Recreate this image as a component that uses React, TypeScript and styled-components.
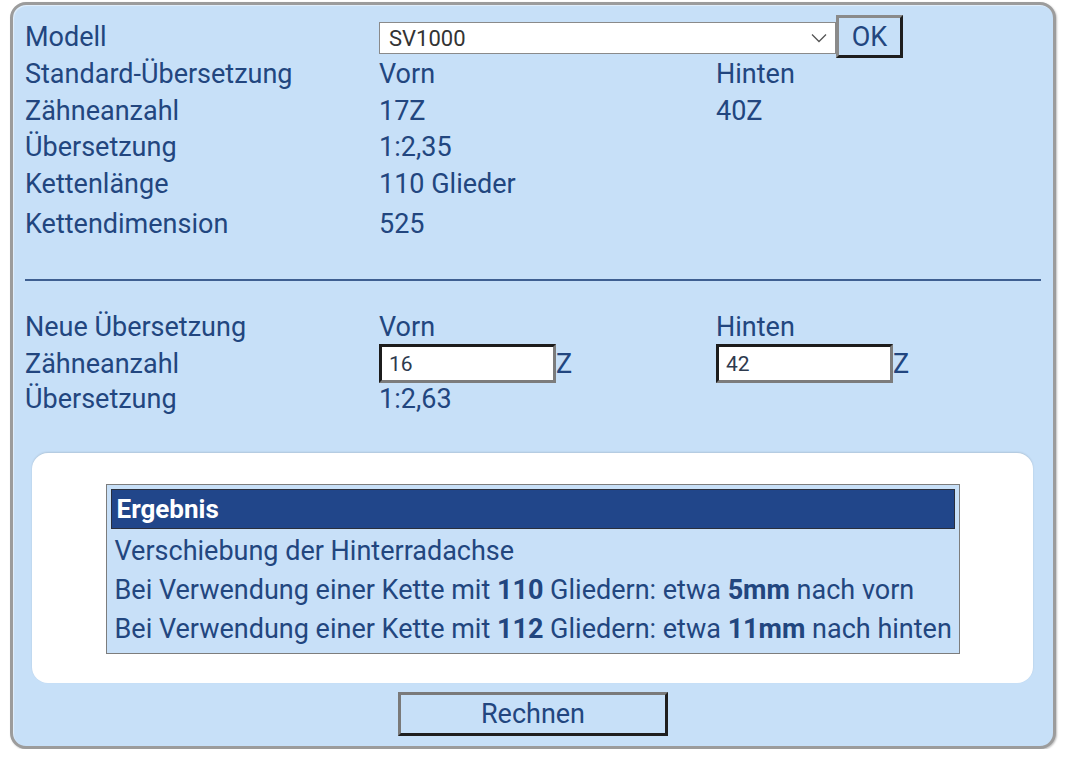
import React from "react";
import styled, { createGlobalStyle } from "styled-components";

const Global = createGlobalStyle`
  html, body { margin: 0; padding: 0; background: #ffffff; }
  body {
    font-family: Roboto, "Noto Sans", "Liberation Sans", sans-serif;
    color: #22467f;
  }
`;

const Panel = styled.div`
  box-sizing: border-box;
  margin: 2px 0 0 10px;
  width: 1046px;
  height: 747px;
  border: 3px solid #9c9c9c;
  border-radius: 16px;
  background: #c7e0f8;
  box-shadow: 1px 1px 2px rgba(0, 0, 0, 0.25), inset 1px 1px 1px rgba(255, 255, 255, 0.5);
  padding: 10px 12px 0 12px;
  display: flex;
  flex-direction: column;
`;

const Row = styled.div<{ $h: number; $mt?: number }>`
  display: grid;
  grid-template-columns: 354px 337px 1fr;
  align-items: center;
  height: ${(p) => p.$h}px;
  margin-top: ${(p) => p.$mt ?? 0}px;
  font-size: 27px;
  line-height: normal;
  white-space: nowrap;
`;

const Cell = styled.div`
  display: flex;
  align-items: center;
`;

const Controls = styled.div`
  grid-column: 2 / 4;
  align-self: start;
  display: flex;
  align-items: flex-start;
`;

const SelectBox = styled.div`
  box-sizing: border-box;
  margin-top: 7px;
  width: 457px;
  height: 32px;
  background: #ffffff;
  border: 1px solid #8a8a8a;
  display: flex;
  align-items: center;
  justify-content: space-between;
  padding: 0 8px 0 9px;
  font-size: 22px;
  color: #333333;
`;

const OkButton = styled.button`
  box-sizing: border-box;
  width: 67px;
  height: 43px;
  margin: 0;
  padding: 0;
  background: #c7e0f8;
  border-style: solid;
  border-width: 3px;
  border-color: #8a8a8a #1e1e1e #1e1e1e #8a8a8a;
  font-family: inherit;
  font-size: 27px;
  color: #22467f;
  cursor: pointer;
`;

const Divider = styled.hr`
  margin: 33px 0 0 0;
  border: none;
  height: 2px;
  background: #3e5f91;
`;

const NumberInput = styled.input`
  box-sizing: border-box;
  width: 177px;
  height: 39px;
  margin: 0;
  padding: 0 0 0 7px;
  background: #ffffff;
  border-style: solid;
  border-width: 3px;
  border-color: #1c1c1c #7c7c7c #7c7c7c #1c1c1c;
  font-family: inherit;
  font-size: 21px;
  color: #2e3a4e;
  outline: none;
`;

const Unit = styled.span`
  font-size: 27px;
`;

const Card = styled.div`
  box-sizing: border-box;
  margin: 38px 0 0 7px;
  width: 1001px;
  height: 230px;
  background: #ffffff;
  border-radius: 16px;
  box-shadow: 0 -1px 2px rgba(0, 0, 0, 0.12);
  padding-top: 31px;
  display: flex;
  justify-content: center;
  align-items: flex-start;
`;

const ResultTable = styled.div`
  box-sizing: border-box;
  width: 854px;
  height: 170px;
  border: 1px solid #7d7d7d;
  background: #c8e0f8;
  padding: 4px;
  display: flex;
  flex-direction: column;
`;

const ResultHeader = styled.div`
  box-sizing: border-box;
  height: 40px;
  background: #21468a;
  border: 1px solid #2a2f3d;
  color: #ffffff;
  font-weight: 700;
  font-size: 26px;
  display: flex;
  align-items: center;
  padding-left: 5px;
`;

const ResultLine = styled.div<{ $first?: boolean }>`
  height: 39.5px;
  margin-top: ${(p) => (p.$first ? 2 : 0)}px;
  display: flex;
  align-items: center;
  padding-left: 4px;
  font-size: 27px;
  white-space: nowrap;
  color: #22467f;
`;

const Footer = styled.div`
  display: flex;
  justify-content: center;
  margin-top: 9px;
`;

const CalcButton = styled.button`
  box-sizing: border-box;
  width: 270px;
  height: 44px;
  margin: 0;
  padding: 0;
  background: #c7e0f8;
  border-style: solid;
  border-width: 3px;
  border-color: #7a7a7a #1f1f1f #1f1f1f #7a7a7a;
  font-family: inherit;
  font-size: 27px;
  color: #22467f;
  cursor: pointer;
`;

const Chevron = () => (
  <svg width="16" height="10" viewBox="0 0 16 10" fill="none">
    <path d="M1 1.5 L8 8.5 L15 1.5" stroke="#555" strokeWidth="1.3" />
  </svg>
);

export default function App() {
  return (
    <>
      <Global />
      <Panel>
        <Row $h={41}>
          <span>Modell</span>
          <Controls>
            <SelectBox>
              <span>SV1000</span>
              <Chevron />
            </SelectBox>
            <OkButton>OK</OkButton>
          </Controls>
        </Row>
        <Row $h={36.5}>
          <span>Standard-Übersetzung</span>
          <span>Vorn</span>
          <span>Hinten</span>
        </Row>
        <Row $h={36.5}>
          <span>Zähneanzahl</span>
          <span>17Z</span>
          <span>40Z</span>
        </Row>
        <Row $h={36.5}>
          <span>Übersetzung</span>
          <span>1:2,35</span>
          <span />
        </Row>
        <Row $h={36.5}>
          <span>Kettenlänge</span>
          <span>110 Glieder</span>
          <span />
        </Row>
        <Row $h={44}>
          <span>Kettendimension</span>
          <span>525</span>
          <span />
        </Row>

        <Divider />

        <Row $h={34} $mt={29}>
          <span>Neue Übersetzung</span>
          <span>Vorn</span>
          <span>Hinten</span>
        </Row>
        <Row $h={39}>
          <span>Zähneanzahl</span>
          <Cell>
            <NumberInput defaultValue="16" />
            <Unit>Z</Unit>
          </Cell>
          <Cell>
            <NumberInput defaultValue="42" />
            <Unit>Z</Unit>
          </Cell>
        </Row>
        <Row $h={32}>
          <span>Übersetzung</span>
          <span>1:2,63</span>
          <span />
        </Row>

        <Card>
          <ResultTable>
            <ResultHeader>Ergebnis</ResultHeader>
            <ResultLine $first>Verschiebung der Hinterradachse</ResultLine>
            <ResultLine>
              Bei Verwendung einer Kette mit&nbsp;<b>110</b>&nbsp;Gliedern: etwa&nbsp;<b>5mm</b>&nbsp;nach vorn
            </ResultLine>
            <ResultLine>
              Bei Verwendung einer Kette mit&nbsp;<b>112</b>&nbsp;Gliedern: etwa&nbsp;<b>11mm</b>&nbsp;nach hinten
            </ResultLine>
          </ResultTable>
        </Card>

        <Footer>
          <CalcButton>Rechnen</CalcButton>
        </Footer>
      </Panel>
    </>
  );
}
